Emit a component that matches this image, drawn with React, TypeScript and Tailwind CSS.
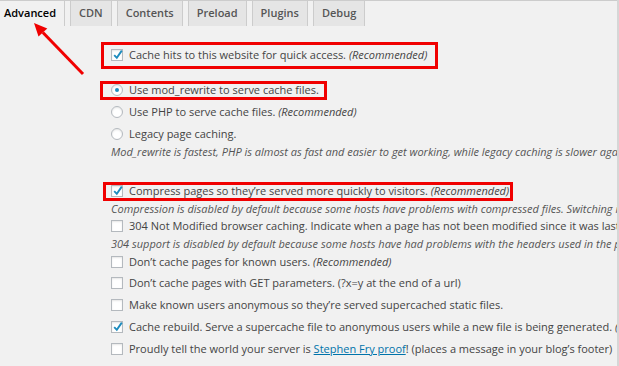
import React from 'react';

type Tab = { label: string; active?: boolean };

const TABS: Tab[] = [
  { label: 'Advanced', active: true },
  { label: 'CDN' },
  { label: 'Contents' },
  { label: 'Preload' },
  { label: 'Plugins' },
  { label: 'Debug' },
];

const CheckBox: React.FC<{ checked?: boolean }> = ({ checked }) => (
  <span className="relative flex h-[12px] w-[12px] shrink-0 items-center justify-center border border-[#b4b9be] bg-white shadow-[inset_0_1px_2px_rgba(0,0,0,0.1)]">
    {checked && (
      <svg className="absolute -top-[2px] left-[0px]" width="12" height="13" viewBox="0 0 12 13">
        <path d="M2.2 7.2 L4.8 9.8 L9.8 2.6" fill="none" stroke="#1e8cbe" strokeWidth="1.9" />
      </svg>
    )}
  </span>
);

const Radio: React.FC<{ checked?: boolean }> = ({ checked }) => (
  <span className="flex h-[12px] w-[12px] shrink-0 items-center justify-center rounded-full border border-[#b4b9be] bg-white shadow-[inset_0_1px_2px_rgba(0,0,0,0.1)]">
    {checked && <span className="h-[4px] w-[4px] rounded-full bg-[#1e8cbe]" />}
  </span>
);

const Row: React.FC<{ h?: string; children: React.ReactNode; className?: string }> = ({
  h = 'h-[22px]',
  children,
  className = '',
}) => (
  <div className={`flex ${h} items-center gap-[6px] whitespace-nowrap text-[11px] text-[#444] ${className}`}>
    {children}
  </div>
);

const Note: React.FC<{ h?: string; children: React.ReactNode; className?: string }> = ({
  h = 'h-[14px] leading-[14px]',
  children,
  className = '',
}) => (
  <p className={`${h} whitespace-nowrap text-[11px] italic text-[#555] ${className}`}>{children}</p>
);

const Rec = () => <em className="italic">(Recommended)</em>;

export default function App() {
  return (
    <div className="relative flex h-[366px] w-[619px] overflow-hidden bg-[#f1f1f1] font-['Open_Sans',sans-serif]">
      <div className="min-w-0 flex-1 overflow-hidden border-t border-[#cccccc]">
        {/* Tabs */}
        <div className="flex h-[25px] items-stretch gap-[5px]">
          {TABS.map((t) =>
            t.active ? (
              <div
                key={t.label}
                className="flex items-center border-r border-[#cccccc] bg-[#f1f1f1] pl-[4px] pr-[8px] text-[11px] font-semibold text-black"
              >
                {t.label}
              </div>
            ) : (
              <div
                key={t.label}
                className="flex items-center border-x border-[#cccccc] bg-[#e5e5e5] px-[8px] text-[11px] font-semibold text-[#555]"
              >
                {t.label}
              </div>
            )
          )}
        </div>

        {/* Settings */}
        <div className="mt-[18px] pl-[111px]">
          <Row>
            <CheckBox checked />
            <span>
              Cache hits to this website for quick access. <Rec />
            </span>
          </Row>

          <Row className="mt-[13px]">
            <Radio checked />
            <span>Use mod_rewrite to serve cache files.</span>
          </Row>
          <Row>
            <Radio />
            <span>
              Use PHP to serve cache files. <Rec />
            </span>
          </Row>
          <Row>
            <Radio />
            <span>Legacy page caching.</span>
          </Row>
          <Note>
            Mod_rewrite is fastest, PHP is almost as fast and easier to get working, while legacy caching is slower again,
            and more flexible and also easy to get working.
          </Note>

          <Row className="mt-[21px]">
            <CheckBox checked />
            <span>
              Compress pages so they’re served more quickly to visitors. <Rec />
            </span>
          </Row>
          <Note>
            Compression is disabled by default because some hosts have problems with compressed files. Switching it on and
            off clears the cache.
          </Note>
          <Row h="h-[20px]">
            <CheckBox />
            <span>
              304 Not Modified browser caching. Indicate when a page has not been modified since it was last requested.{' '}
              <Rec />
            </span>
          </Row>
          <Note h="h-[16px] leading-[16px]">
            304 support is disabled by default because some hosts have had problems with the headers used in the past.
          </Note>
          <Row h="h-[20px]">
            <CheckBox />
            <span>
              Don’t cache pages for known users. <Rec />
            </span>
          </Row>
          <Row>
            <CheckBox />
            <span>Don’t cache pages with GET parameters. (?x=y at the end of a url)</span>
          </Row>
          <Row>
            <CheckBox />
            <span>Make known users anonymous so they’re served supercached static files.</span>
          </Row>
          <Row>
            <CheckBox checked />
            <span>
              Cache rebuild. Serve a supercache file to anonymous users while a new file is being generated. <Rec />
            </span>
          </Row>
          <Row>
            <CheckBox />
            <span>
              Proudly tell the world your server is{' '}
              <a className="text-[#0073aa] underline">Stephen Fry proof</a>! (places a message in your blog’s footer)
            </span>
          </Row>
        </div>
      </div>
      <div className="w-[2px] shrink-0 bg-[#d6d6d6]" />

      {/* Red annotations */}
      <div className="pointer-events-none absolute left-[101px] top-[42px] h-[27px] w-[337px] border-[3px] border-[#f00000]" />
      <div className="pointer-events-none absolute left-[100px] top-[81px] h-[19px] w-[227px] border-[3px] border-[#f00000]" />
      <div className="pointer-events-none absolute left-[103px] top-[182px] h-[19px] w-[410px] border-[3px] border-[#f00000]" />
      <svg className="pointer-events-none absolute left-0 top-0" width="120" height="90" viewBox="0 0 120 90">
        <line x1="83" y1="74" x2="42.9" y2="32.5" stroke="#f00000" strokeWidth="3" />
        <polygon points="34,23 47.3,28.4 38.5,36.6" fill="#f00000" />
      </svg>
    </div>
  );
}
